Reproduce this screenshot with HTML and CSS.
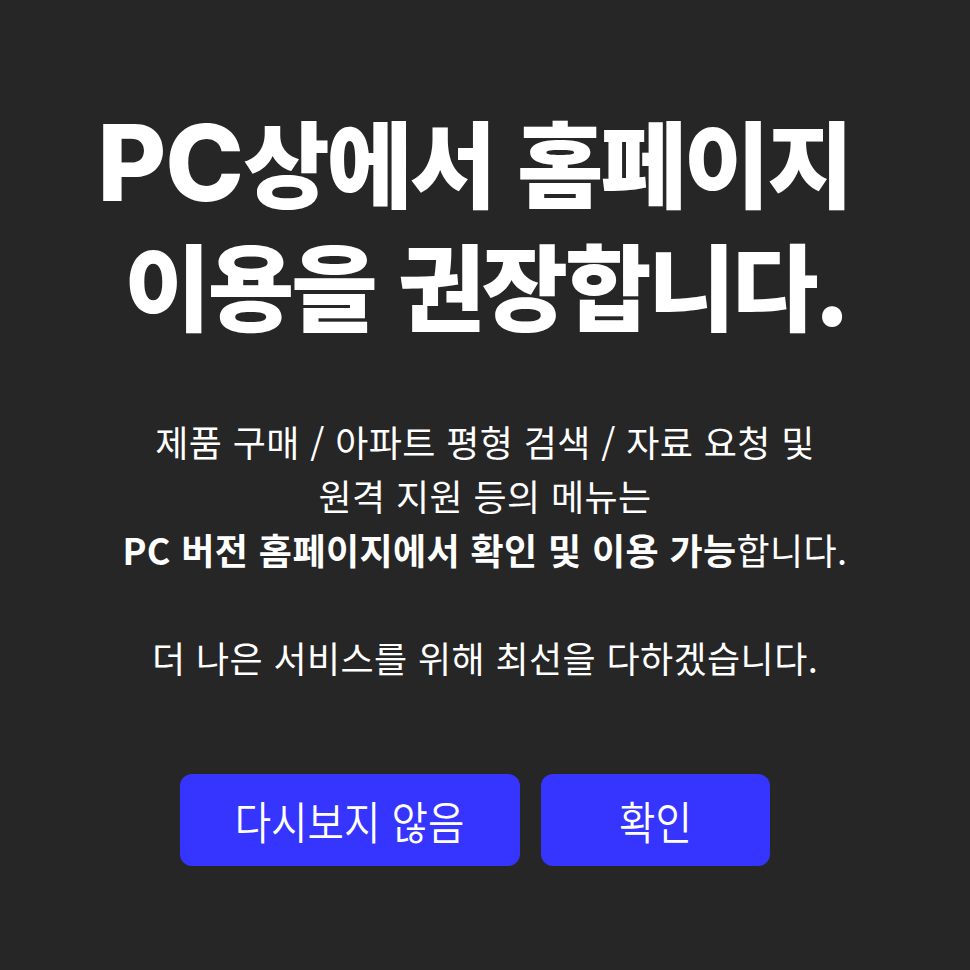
FILE: index.html
```html
<!DOCTYPE html>
<html lang="ko">
<head>
<meta charset="utf-8">
<link rel="stylesheet" href="styles.css">
</head>
<body>
<main class="notice">
  <h1 class="title">
    <span class="line line-first"><span class="latin">PC</span>상에서 홈페이지</span>
    <span class="line">이용을 권장합니다.</span>
  </h1>
  <div class="desc">
    <p class="desc-line">제품 구매 / 아파트 평형 검색 / 자료 요청 및</p>
    <p class="desc-line">원격 지원 등의 메뉴는</p>
    <p class="desc-line"><strong>PC 버전 홈페이지에서 확인 및 이용 가능</strong>합니다.</p>
    <p class="desc-line desc-gap">더 나은 서비스를 위해 최선을 다하겠습니다.</p>
  </div>
  <div class="actions">
    <button class="btn btn-wide" type="button"><span class="btn-label">다시보지 않음</span></button>
    <button class="btn btn-narrow" type="button"><span class="btn-label">확인</span></button>
  </div>
</main>
</body>
</html>
```

FILE: styles.css
```css
html, body {
  margin: 0;
  padding: 0;
  background: #262626;
}

body {
  width: 970px;
  height: 970px;
  overflow: hidden;
  font-family: "Noto Sans CJK KR", "Noto Sans", sans-serif;
  color: #ffffff;
}

.notice {
  display: flex;
  flex-direction: column;
  align-items: center;
  padding-top: 100px;
}

.title {
  margin: 0;
  display: flex;
  flex-direction: column;
  align-items: center;
  font-size: 94px;
  font-weight: 900;
  line-height: 120px;
  letter-spacing: -3px;
}

.line {
  display: block;
  white-space: nowrap;
}

.line-first {
  margin-right: 22px;
}

.latin {
  font-family: "Inter", "Noto Sans", sans-serif;
  font-weight: 800;
  font-size: 106px;
  letter-spacing: -1px;
}

.desc {
  margin-top: 71px;
  text-align: center;
  font-size: 36px;
  line-height: 54px;
  font-weight: 400;
  letter-spacing: 0.4px;
}

.desc-line {
  margin: 0;
  white-space: nowrap;
}

.desc-line strong {
  font-weight: 700;
}

.desc-gap {
  margin-top: 54px;
}

.actions {
  margin-top: 90px;
  display: flex;
  gap: 21px;
  margin-right: 21px;
}

.btn {
  height: 92px;
  border: 0;
  border-radius: 12px;
  background: #3535ff;
  color: #ffffff;
  font-family: "Noto Sans CJK KR", "Noto Sans", sans-serif;
  font-size: 45px;
  font-weight: 350;
  display: flex;
  align-items: center;
  justify-content: center;
  padding: 0;
}

.btn-wide {
  width: 340px;
}

.btn-narrow {
  width: 229px;
}

.btn-label {
  display: inline-block;
  transform: scaleX(0.88);
  white-space: nowrap;
}
```
